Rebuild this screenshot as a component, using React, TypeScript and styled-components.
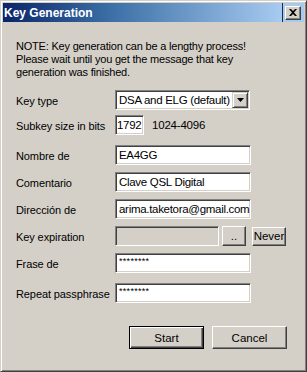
import styled, { createGlobalStyle } from "styled-components";

const GlobalStyle = createGlobalStyle`
  html, body {
    margin: 0;
    padding: 0;
    background: #ffffff;
  }
  body {
    font-family: "Liberation Sans", Arial, sans-serif;
    font-size: 11px;
    color: #000000;
  }
`;

const Window = styled.div`
  width: 307px;
  height: 372px;
  box-sizing: border-box;
  background: #d4d0c8;
  border-top: 1px solid #d4d0c8;
  border-left: 1px solid #d4d0c8;
  border-right: 1px solid #404040;
  border-bottom: 1px solid #404040;
  box-shadow: inset 1px 1px #ffffff, inset -1px -1px #808080;
  padding: 2px;
  display: flex;
  flex-direction: column;
`;

const TitleBar = styled.div`
  height: 19px;
  display: flex;
  align-items: center;
  background: linear-gradient(90deg, #0a246a 0%, #3a6ea5 35%, #a6caf0 92%, #a6caf0 100%);
  padding-left: 1px;
  padding-right: 3px;
`;

const TitleText = styled.span`
  flex: 1;
  color: #ffffff;
  font-weight: bold;
  font-size: 12px;
`;

const TitleDivider = styled.div`
  width: 1px;
  align-self: stretch;
  background: #1c2c48;
  margin-right: 2px;
`;

const CloseButton = styled.div`
  width: 16px;
  height: 14px;
  box-sizing: border-box;
  background: #d4d0c8;
  border-top: 1px solid #ffffff;
  border-left: 1px solid #ffffff;
  border-right: 1px solid #404040;
  border-bottom: 1px solid #404040;
  box-shadow: inset -1px -1px #808080;
  display: flex;
  align-items: center;
  justify-content: center;
`;

const Body = styled.div`
  flex: 1;
  display: flex;
  flex-direction: column;
  padding: 18px 16px 0 13px;
`;

const Note = styled.p`
  margin: 0 0 11px 0;
  line-height: 13px;
  letter-spacing: -0.2px;
`;

const Form = styled.div`
  display: grid;
  grid-template-columns: 99px 1fr;
  align-items: center;
`;

const Label = styled.div<{ $mt?: number }>`
  margin-top: ${({ $mt }) => $mt ?? 0}px;
  padding-top: 2px;
  white-space: nowrap;
  letter-spacing: -0.1px;
`;

const FieldCell = styled.div<{ $mt?: number; $gap?: number }>`
  margin-top: ${({ $mt }) => $mt ?? 0}px;
  display: flex;
  align-items: center;
  gap: ${({ $gap }) => $gap ?? 4}px;
`;

const TextBox = styled.div<{ $width?: number; $disabled?: boolean }>`
  width: ${({ $width }) => $width ?? 136}px;
  height: 20px;
  box-sizing: border-box;
  background: ${({ $disabled }) => ($disabled ? "#d4d0c8" : "#ffffff")};
  border-top: 1px solid #808080;
  border-left: 1px solid #808080;
  border-right: 1px solid #ffffff;
  border-bottom: 1px solid #ffffff;
  box-shadow: inset 1px 1px #404040, inset -1px -1px #d4d0c8;
  padding: 0 2px 0 3px;
  display: flex;
  align-items: center;
  white-space: nowrap;
  overflow: hidden;
  font-size: 11.5px;
  letter-spacing: -0.3px;
`;

const Caret = styled.span`
  display: inline-block;
  flex-shrink: 0;
  width: 1px;
  height: 13px;
  background: #000000;
  margin-left: 1px;
`;

const Masked = styled.span`
  font-size: 9px;
  letter-spacing: 0.3px;
  margin-top: -4px;
`;

const DropButton = styled.div`
  width: 16px;
  height: 16px;
  margin-left: auto;
  margin-right: -1px;
  flex-shrink: 0;
  box-sizing: border-box;
  background: #d4d0c8;
  border-top: 1px solid #d4d0c8;
  border-left: 1px solid #d4d0c8;
  border-right: 1px solid #404040;
  border-bottom: 1px solid #404040;
  box-shadow: inset 1px 1px #ffffff, inset -1px -1px #808080;
  display: flex;
  align-items: center;
  justify-content: center;
`;

const Hint = styled.span`
  margin-left: 4px;
  font-size: 11.5px;
  letter-spacing: -0.2px;
`;

const Button = styled.div<{ $width: number; $height: number; $default?: boolean }>`
  width: ${({ $width }) => $width}px;
  height: ${({ $height }) => $height}px;
  box-sizing: border-box;
  background: #d4d0c8;
  border: 1px solid;
  border-color: ${({ $default }) =>
    $default ? "#000000" : "#ffffff #404040 #404040 #ffffff"};
  box-shadow: ${({ $default }) =>
    $default
      ? "inset 1px 1px #ffffff, inset -1px -1px #404040, inset -2px -2px #808080"
      : "inset -1px -1px #808080"};
  display: flex;
  align-items: center;
  justify-content: center;
  font-size: 11.5px;
`;

const Buttons = styled.div`
  margin-top: auto;
  margin-bottom: 20px;
  display: flex;
  justify-content: flex-end;
  gap: 8px;
  padding-right: 1px;
`;

export default function App() {
  return (
    <>
      <GlobalStyle />
      <Window>
        <TitleBar>
          <TitleText>Key Generation</TitleText>
          <TitleDivider />
          <CloseButton>
            <svg width="8" height="7" viewBox="0 0 8 7">
              <path d="M0 0h2l2 2 2-2h2L5 3.5 8 7H6L4 5 2 7H0l3-3.5z" fill="#000" />
            </svg>
          </CloseButton>
        </TitleBar>
        <Body>
          <Note>
            NOTE: Key generation can be a lengthy process!
            <br />
            Please wait until you get the message that key
            <br />
            generation was finished.
          </Note>
          <Form>
            <Label>Key type</Label>
            <FieldCell>
              <TextBox $width={135}>
                DSA and ELG (default)
                <DropButton>
                  <svg width="7" height="4" viewBox="0 0 7 4">
                    <path d="M0 0h7L3.5 4z" fill="#000" />
                  </svg>
                </DropButton>
              </TextBox>
            </FieldCell>

            <Label $mt={5}>Subkey size in bits</Label>
            <FieldCell $mt={5}>
              <TextBox $width={29} style={{ padding: "0 1px" }}>1792</TextBox>
              <Hint>1024-4096</Hint>
            </FieldCell>

            <Label $mt={10}>Nombre de</Label>
            <FieldCell $mt={10}>
              <TextBox>EA4GG</TextBox>
            </FieldCell>

            <Label $mt={7}>Comentario</Label>
            <FieldCell $mt={7}>
              <TextBox>Clave QSL Digital</TextBox>
            </FieldCell>

            <Label $mt={7}>Dirección de</Label>
            <FieldCell $mt={7}>
              <TextBox>
                arima.taketora@gmail.com
                <Caret />
              </TextBox>
            </FieldCell>

            <Label $mt={7}>Key expiration</Label>
            <FieldCell $mt={7} $gap={3}>
              <TextBox $width={104} $disabled />
              <Button $width={24} $height={20}>..</Button>
              <Button $width={34} $height={19} style={{ marginLeft: 3 }}>Never</Button>
            </FieldCell>

            <Label $mt={7}>Frase de</Label>
            <FieldCell $mt={7}>
              <TextBox>
                <Masked>********</Masked>
              </TextBox>
            </FieldCell>

            <Label $mt={10}>Repeat passphrase</Label>
            <FieldCell $mt={10}>
              <TextBox>
                <Masked>********</Masked>
              </TextBox>
            </FieldCell>
          </Form>
          <Buttons>
            <Button $width={75} $height={23} $default>Start</Button>
            <Button $width={75} $height={23}>Cancel</Button>
          </Buttons>
        </Body>
      </Window>
    </>
  );
}
